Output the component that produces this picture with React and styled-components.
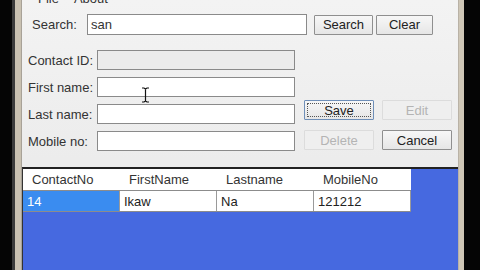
import React from "react";
import styled, { createGlobalStyle } from "styled-components";

const GlobalStyle = createGlobalStyle`
  html, body {
    margin: 0;
    padding: 0;
    background: #000;
    overflow: hidden;
  }
  * { box-sizing: border-box; }
`;

const rows = [{ id: "14", first: "Ikaw", last: "Na", mobile: "121212" }];
const columns = ["ContactNo", "FirstName", "Lastname", "MobileNo"];

export default function App() {
  return (
    <>
      <GlobalStyle />
      <Screen>
        <BlackEdge $w={12} />
        <Frame $side="left" />
        <Window>
          <MenuBar>
            <MenuItem>File</MenuItem>
            <MenuItem>About</MenuItem>
          </MenuBar>

          <SearchRow>
            <SearchLabel>Search:</SearchLabel>
            <SearchInput defaultValue="san" />
            <Button $w={59}>Search</Button>
            <Button $w={57}>Clear</Button>
          </SearchRow>

          <FieldGrid>
            <Label>Contact ID:</Label>
            <Input disabled />
            <span />
            <span />

            <Label>First name:</Label>
            <Input />
            <span />
            <span />

            <Label>Last name:</Label>
            <Input />
            <Button $w={70} $focus $shift={-4}>
              <FocusRing>Save</FocusRing>
            </Button>
            <Button $w={70} disabled $shift={-4}>
              Edit
            </Button>

            <Label>Mobile no:</Label>
            <Input />
            <Button $w={70} disabled $shift={-1}>
              Delete
            </Button>
            <Button $w={70} $shift={-1}>
              Cancel
            </Button>
          </FieldGrid>

          <GridPanel>
            <Table>
              <HeadRow>
                {columns.map((c) => (
                  <HeadCell key={c}>{c}</HeadCell>
                ))}
              </HeadRow>
              {rows.map((r) => (
                <DataRow key={r.id}>
                  <Cell $selected>{r.id}</Cell>
                  <Cell>{r.first}</Cell>
                  <Cell>{r.last}</Cell>
                  <Cell>{r.mobile}</Cell>
                </DataRow>
              ))}
            </Table>
          </GridPanel>

          <Cursor width="9" height="16" viewBox="0 0 9 16">
            <path d="M1 1h2l1.5 1L6 1h2M4.5 2v12M1 15h2l1.5-1L6 15h2" stroke="#111" strokeWidth="1.2" fill="none" />
          </Cursor>
        </Window>
        <Frame $side="right" />
        <BlackEdge $w={16} />
      </Screen>
    </>
  );
}

const Screen = styled.div`
  display: flex;
  width: 480px;
  height: 270px;
  background: #000;
  font-family: "Liberation Sans", Arial, sans-serif;
  font-size: 13px;
  color: #222;
`;

const BlackEdge = styled.div`
  width: ${(p) => p.$w}px;
  flex-shrink: 0;
  background: #050505;
`;

const Frame = styled.div`
  width: ${(p) => (p.$side === "left" ? 10 : 6)}px;
  flex-shrink: 0;
  background: ${(p) =>
    p.$side === "left"
      ? "linear-gradient(to right, #3a3a3a 0 3px, #c9c1b1 3px 9px, #a8a298 9px)"
      : "linear-gradient(to right, #b9b2a6 0 1px, #cfc7b7 1px)"};
`;

const Window = styled.div`
  position: relative;
  width: 436px;
  flex-shrink: 0;
  display: flex;
  flex-direction: column;
  background: linear-gradient(to bottom, #f3f3f3, #ececec 160px);
  overflow: hidden;
`;

const MenuBar = styled.div`
  display: flex;
  gap: 15px;
  height: 14px;
  margin-top: -9px;
  padding-left: 16px;
  align-items: center;
`;

const MenuItem = styled.span`
  font-size: 13px;
  color: #333;
`;

const SearchRow = styled.div`
  display: flex;
  align-items: center;
  height: 21px;
  margin-top: 9px;
  padding-left: 10px;
`;

const SearchLabel = styled.span`
  width: 55px;
  font-size: 13px;
  color: #333;
`;

const SearchInput = styled.input`
  width: 220px;
  height: 21px;
  margin-right: 7px;
  border: 1px solid #8a8a8a;
  background: #fff;
  font-family: "Liberation Sans", Arial, sans-serif;
  font-size: 13px;
  color: #333;
  padding: 0 3px;
  outline: none;
`;

const Button = styled.button`
  width: ${(p) => p.$w}px;
  height: 20px;
  margin-right: 3px;
  position: relative;
  top: ${(p) => p.$shift || 0}px;
  padding: 0;
  font-family: "Liberation Sans", Arial, sans-serif;
  font-size: 13px;
  color: ${(p) => (p.disabled ? "#b4b4b4" : "#222")};
  background: ${(p) =>
    p.disabled ? "#efefef" : "linear-gradient(to bottom, #f7f7f7, #e6e6e6)"};
  border: 1px solid
    ${(p) => (p.disabled ? "#dcdcdc" : p.$focus ? "#6f8fb8" : "#8f8f8f")};
  border-radius: 1px;
  display: flex;
  align-items: center;
  justify-content: center;
`;

const FocusRing = styled.span`
  display: flex;
  align-items: center;
  justify-content: center;
  width: calc(100% - 4px);
  height: calc(100% - 4px);
  border: 1px dotted #555;
`;

const FieldGrid = styled.div`
  display: grid;
  grid-template-columns: 69px 198px 87px 70px;
  grid-auto-rows: 20px;
  row-gap: 7px;
  margin-top: 15px;
  padding-left: 6px;
  align-items: center;

  & > :nth-child(4n + 3) {
    margin-left: 9px;
  }
`;

const Label = styled.span`
  font-size: 13px;
  color: #333;
  white-space: nowrap;
`;

const Input = styled.input`
  width: 198px;
  height: 20px;
  border: 1px solid #8a8a8a;
  background: ${(p) => (p.disabled ? "#ececec" : "#fff")};
  outline: none;
`;

const GridPanel = styled.div`
  flex: 1;
  margin-top: 16px;
  border-top: 2px solid #222;
  border-left: 1px solid #333;
  background: #4669e0;
`;

const Table = styled.div`
  display: flex;
  flex-direction: column;
  width: 388px;
`;

const HeadRow = styled.div`
  display: grid;
  grid-template-columns: repeat(4, 97px);
  height: 22px;
  background: #fff;
  border-bottom: 1px solid #8c8c8c;
`;

const HeadCell = styled.div`
  display: flex;
  align-items: center;
  padding-left: 9px;
  font-size: 13px;
  color: #333;
`;

const DataRow = styled.div`
  display: grid;
  grid-template-columns: repeat(4, 97px);
  height: 21px;
  background: #fff;
  border-bottom: 1px solid #8c8c8c;
`;

const Cell = styled.div`
  display: flex;
  align-items: center;
  padding-left: 4px;
  font-size: 13px;
  color: ${(p) => (p.$selected ? "#fff" : "#222")};
  background: ${(p) => (p.$selected ? "#3a8cf0" : "#fff")};
  border-right: 1px solid #9a9a9a;
`;

const Cursor = styled.svg`
  position: absolute;
  left: 119px;
  top: 87px;
`;
